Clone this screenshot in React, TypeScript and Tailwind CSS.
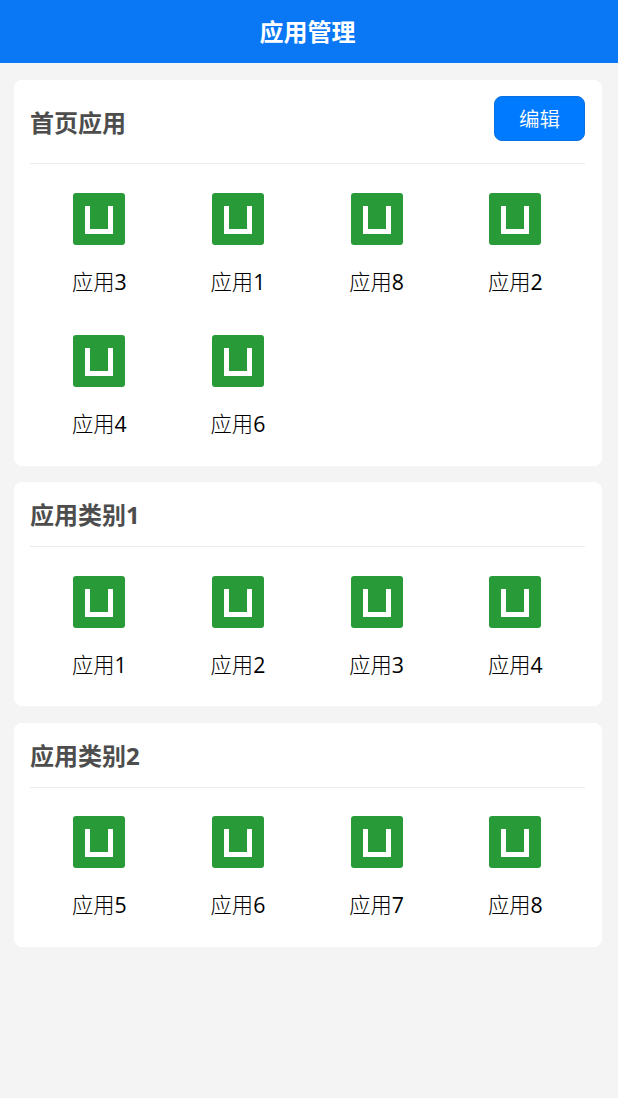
import clsx from 'clsx'

type Section = {
    title: string
    apps: number[]
    editable?: boolean
    className: string
    gridClassName: string
}

const sections: Section[] = [
    {
        title: '首页应用',
        apps: [3, 1, 8, 2, 4, 6],
        editable: true,
        className: 'mt-[17px] h-[386px]',
        gridClassName: 'pt-[29px]',
    },
    {
        title: '应用类别1',
        apps: [1, 2, 3, 4],
        className: 'mt-4 h-56',
        gridClassName: 'pt-[29px]',
    },
    {
        title: '应用类别2',
        apps: [5, 6, 7, 8],
        className: 'mt-[17px] h-56',
        gridClassName: 'pt-7',
    },
]

export default function App() {
    return (
        <div className="min-h-screen bg-[#f4f4f4] font-['Open_Sans','Noto_Sans_CJK_SC',sans-serif]">
            <header className="flex h-[63px] items-center justify-center bg-[#0a78f5] pr-[3px]">
                <h1 className="text-2xl font-bold text-white">应用管理</h1>
            </header>

            <main className="flex flex-col pr-4 pl-3.5">
                {sections.map((section) => (
                    <AppSection key={section.title} section={section} />
                ))}
            </main>
        </div>
    )
}

function AppSection({ section }: { section: Section }) {
    return (
        <section className={clsx('rounded-lg bg-white pr-[17px] pl-4', section.className)}>
            <div
                className={clsx(
                    'flex justify-between border-b border-[#ebebeb]',
                    section.editable ? 'h-[84px] pt-4' : 'h-[65px] pt-[6px]',
                )}
            >
                <h2 className="text-2xl leading-[53px] font-bold text-[#4d4d4d]">{section.title}</h2>
                {section.editable && (
                    <button className="h-[45px] w-[91px] rounded-lg border border-[#0a6fe0] bg-[#007aff] pt-0.5 text-[20.5px] font-[350] text-white">
                        编辑
                    </button>
                )}
            </div>

            <div className={clsx('mr-[0.4px] grid grid-cols-4 gap-y-[30px]', section.gridClassName)}>
                {section.apps.map((id) => (
                    <AppItem key={id} id={id} />
                ))}
            </div>
        </section>
    )
}

function AppItem({ id }: { id: number }) {
    return (
        <div className="flex h-28 flex-col items-center">
            <AppIcon />
            <span className="mt-[21px] text-[21.3px] leading-[32px] font-light text-black">
                应用<span className="font-normal">{id}</span>
            </span>
        </div>
    )
}

function AppIcon() {
    return (
        <svg width="52" height="52" viewBox="0 0 52 52" fill="none" className="shrink-0">
            <rect width="52" height="52" rx="3" fill="#299a38" />
            <path d="M14.5 13v25.5h23V13" stroke="#fff" strokeWidth="5" />
        </svg>
    )
}
